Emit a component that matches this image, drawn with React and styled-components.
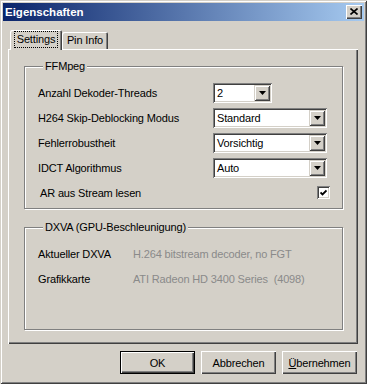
import React from 'react'
import styled, { createGlobalStyle, css } from 'styled-components'

const GlobalStyle = createGlobalStyle`
  html, body { margin: 0; padding: 0; background: #d4d0c8; }
  body { font-family: "Liberation Sans", Arial, sans-serif; font-size: 11px; color: #000; }
`

const raised = css`
  box-shadow: inset 1px 1px #fff, inset -1px -1px #404040, inset -2px -2px #808080;
`

const sunken = css`
  box-shadow: inset 1px 1px #808080, inset -1px -1px #fff, inset 2px 2px #404040, inset -2px -2px #d4d0c8;
`

const Window = styled.div`
  width: 367px;
  height: 384px;
  box-sizing: border-box;
  padding: 3px;
  background: #d4d0c8;
  box-shadow: inset 1px 1px #d4d0c8, inset -1px -1px #404040, inset 2px 2px #fff, inset -2px -2px #808080;
  display: flex;
  flex-direction: column;
`

const TitleBar = styled.div`
  height: 18px;
  display: flex;
  align-items: center;
  justify-content: space-between;
  padding: 0 2px 0 2px;
  background: linear-gradient(to right, #0a246a, #a6caf0);
  color: #fff;
  font-weight: bold;
  font-size: 11.5px;
`

const CloseBtn = styled.div`
  width: 16px;
  height: 14px;
  background: #d4d0c8;
  ${raised}
  display: flex;
  align-items: center;
  justify-content: center;
  svg { margin: -1px 0 0 -1px; }
`

const Body = styled.div`
  flex: 1;
  display: flex;
  flex-direction: column;
  padding: 9px 6px 0 5px;
  letter-spacing: -0.15px;
`

const TabStrip = styled.div`
  display: flex;
  align-items: flex-end;
  padding-left: 2px;
  height: 19px;
  position: relative;
  z-index: 1;
`

const Tab = styled.div`
  box-sizing: border-box;
  width: ${p => p.$w}px;
  height: ${p => (p.$active ? 20 : 17)}px;
  margin-bottom: ${p => (p.$active ? -1 : 0)}px;
  background: #d4d0c8;
  border-radius: 2px 2px 0 0;
  box-shadow: inset 1px 1px #fff, inset -1px 0 #404040, inset -2px 0 #808080;
  display: flex;
  align-items: ${p => (p.$active ? 'flex-start' : 'center')};
  justify-content: center;
  padding-top: ${p => (p.$active ? 2 : 0)}px;
  span {
    padding: 1px 2px;
    line-height: 13px;
    outline: ${p => (p.$active ? '1px dotted #000' : 'none')};
  }
`

const Panel = styled.div`
  height: 295px;
  box-sizing: border-box;
  ${raised}
  padding: 11px 15px 14px 16px;
  display: flex;
  flex-direction: column;
  gap: 12px;
`

const Group = styled.fieldset`
  margin: 0;
  min-width: 0;
  border: 1px solid #808080;
  box-shadow: inset 1px 1px #fff, 1px 1px #fff;
  padding: ${p => p.$pad};
  flex: ${p => (p.$grow ? 1 : 'none')};
  legend {
    margin-left: 5px;
    padding: 0 2px;
    line-height: 13px;
    background: #d4d0c8;
  }
`

const Grid = styled.div`
  display: grid;
  grid-template-columns: ${p => p.$cols};
  grid-auto-rows: 25px;
  align-items: center;
`

const Label = styled.div`
  color: ${p => (p.$dim ? '#8a8a8a' : '#000')};
  white-space: pre;
`

const CheckRow = styled.div`
  grid-column: 1 / -1;
  display: flex;
  align-items: center;
  justify-content: space-between;
  padding-left: 2px;
  width: 290px;
`

const Combo = styled.div`
  box-sizing: border-box;
  width: ${p => p.$w}px;
  height: 20px;
  background: #fff;
  ${sunken}
  display: flex;
  align-items: center;
  justify-content: space-between;
  padding: 2px;
  span { padding-left: 2px; }
`

const DropBtn = styled.div`
  width: 16px;
  height: 16px;
  background: #d4d0c8;
  box-shadow: inset 1px 1px #d4d0c8, inset -1px -1px #404040, inset 2px 2px #fff, inset -2px -2px #808080;
  display: flex;
  align-items: center;
  justify-content: center;
`

const Check = styled.div`
  width: 13px;
  height: 13px;
  box-sizing: border-box;
  background: #fff;
  ${sunken}
  display: flex;
  align-items: center;
  justify-content: center;
`

const ButtonRow = styled.div`
  display: flex;
  justify-content: flex-end;
  gap: 6px;
  margin-top: 7px;
  padding-right: 1px;
`

const Button = styled.div`
  box-sizing: border-box;
  width: 75px;
  height: 23px;
  display: flex;
  align-items: center;
  justify-content: center;
  background: #d4d0c8;
  ${p => p.$default
    ? css`box-shadow: inset 0 0 0 1px #000, inset 2px 2px #fff, inset -2px -2px #404040, inset -3px -3px #808080;`
    : css`box-shadow: inset 1px 1px #fff, inset -1px -1px #404040, inset -2px -2px #808080;`}
  u { text-decoration: underline; }
`

const Arrow = () => (
  <svg width="7" height="4" viewBox="0 0 7 4"><path d="M0 0h7L3.5 4z" fill="#000" /></svg>
)

const ComboBox = ({ w, value }) => (
  <Combo $w={w}>
    <span>{value}</span>
    <DropBtn><Arrow /></DropBtn>
  </Combo>
)

export default function App() {
  return (
    <>
      <GlobalStyle />
      <Window>
        <TitleBar>
          <span>Eigenschaften</span>
          <CloseBtn>
            <svg width="8" height="7" viewBox="0 0 8 7">
              <path d="M0.5 0.5L7.5 6.5M7.5 0.5L0.5 6.5" stroke="#000" strokeWidth="1.6" />
            </svg>
          </CloseBtn>
        </TitleBar>
        <Body>
          <TabStrip>
            <Tab $active $w={52}><span>Settings</span></Tab>
            <Tab $w={46}><span>Pin Info</span></Tab>
          </TabStrip>
          <Panel>
            <Group $pad="7px 14px 3px 13px">
              <legend>FFMpeg</legend>
              <Grid $cols="175px auto">
                <Label>Anzahl Dekoder-Threads</Label>
                <ComboBox w={59} value="2" />
                <Label>H264 Skip-Deblocking Modus</Label>
                <ComboBox w={114} value="Standard" />
                <Label>Fehlerrobustheit</Label>
                <ComboBox w={114} value="Vorsichtig" />
                <Label>IDCT Algorithmus</Label>
                <ComboBox w={114} value="Auto" />
                <CheckRow>
                  <Label>AR aus Stream lesen</Label>
                  <Check>
                    <svg width="7" height="7" viewBox="0 0 7 7">
                      <path d="M0.5 3.5L2.5 5.5L6.5 1.5" stroke="#000" strokeWidth="1.8" fill="none" />
                    </svg>
                  </Check>
                </CheckRow>
              </Grid>
            </Group>
            <Group $grow $pad="7px 14px 0 13px">
              <legend>DXVA (GPU-Beschleunigung)</legend>
              <Grid $cols="95px auto">
                <Label>Aktueller DXVA</Label>
                <Label $dim>H.264 bitstream decoder, no FGT</Label>
                <Label>Grafikkarte</Label>
                <Label $dim>ATI Radeon HD 3400 Series  (4098)</Label>
              </Grid>
            </Group>
          </Panel>
          <ButtonRow>
            <Button $default>OK</Button>
            <Button>Abbrechen</Button>
            <Button><span><u>Ü</u>bernehmen</span></Button>
          </ButtonRow>
        </Body>
      </Window>
    </>
  )
}
